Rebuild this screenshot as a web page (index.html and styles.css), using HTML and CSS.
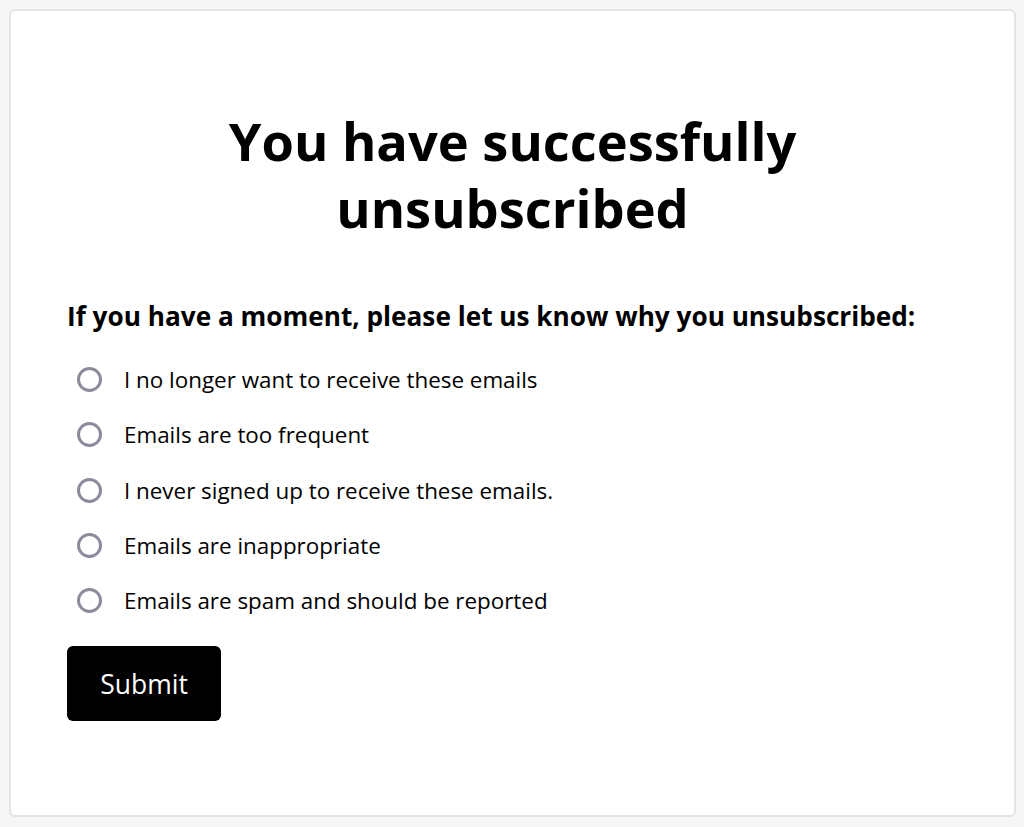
FILE: index.html
```html
<!DOCTYPE html>
<html lang="en">

<head>
    <meta charset="UTF-8">
    <meta name="viewport" content="width=device-width, initial-scale=1.0">
    <link rel="stylesheet" href="styles.css">
    <title>Unsubscribed</title>
</head>

<body>
    <div class="card">
        <h1 class="title">You have successfully<br>unsubscribed</h1>

        <form class="reasons">
            <p class="question">If you have a moment, please let us know why you unsubscribed:</p>

            <label class="option">
                <input type="radio" name="reason" value="no-longer">
                <span>I no longer want to receive these emails</span>
            </label>
            <label class="option">
                <input type="radio" name="reason" value="frequent">
                <span>Emails are too frequent</span>
            </label>
            <label class="option">
                <input type="radio" name="reason" value="never-signed">
                <span>I never signed up to receive these emails.</span>
            </label>
            <label class="option">
                <input type="radio" name="reason" value="inappropriate">
                <span>Emails are inappropriate</span>
            </label>
            <label class="option">
                <input type="radio" name="reason" value="spam">
                <span>Emails are spam and should be reported</span>
            </label>

            <button type="submit" class="submit">Submit</button>
        </form>
    </div>
</body>

</html>
```

FILE: styles.css
```css
* {
    box-sizing: border-box;
    margin: 0;
    padding: 0;
}

body {
    background-color: #f6f6f6;
    font-family: "Open Sans", "Noto Sans", sans-serif;
    color: #000;
    padding: 9px 8px 10px 9px;
    height: 100vh;
}

.card {
    background-color: #fff;
    border: 2px solid #e4e4e4;
    border-radius: 6px;
    height: 100%;
    padding: 96px 56px 0 56px;
}

.title {
    font-size: 52.4px;
    font-weight: 700;
    line-height: 67px;
    text-align: center;
}

.reasons {
    margin-top: 58px;
    display: flex;
    flex-direction: column;
    align-items: flex-start;
}

.question {
    font-size: 26.2px;
    font-weight: 700;
    line-height: 34px;
    margin-bottom: 19px;
}

.option {
    display: flex;
    align-items: center;
    gap: 22px;
    height: 55.3px;
    padding-left: 10px;
    font-size: 22.4px;
    cursor: pointer;
}

.option input {
    appearance: none;
    -webkit-appearance: none;
    width: 25px;
    height: 25px;
    border: 3px solid #8e8a9b;
    border-radius: 50%;
    background-color: #fff;
    cursor: pointer;
}

.option input:checked {
    background-color: #000;
    box-shadow: inset 0 0 0 4px #fff;
}

.submit {
    margin-top: 18px;
    background-color: #000;
    color: #fff;
    border: none;
    border-radius: 6px;
    width: 154px;
    height: 75px;
    font-family: "Open Sans", "Noto Sans", sans-serif;
    font-size: 26.5px;
    cursor: pointer;
}
```
